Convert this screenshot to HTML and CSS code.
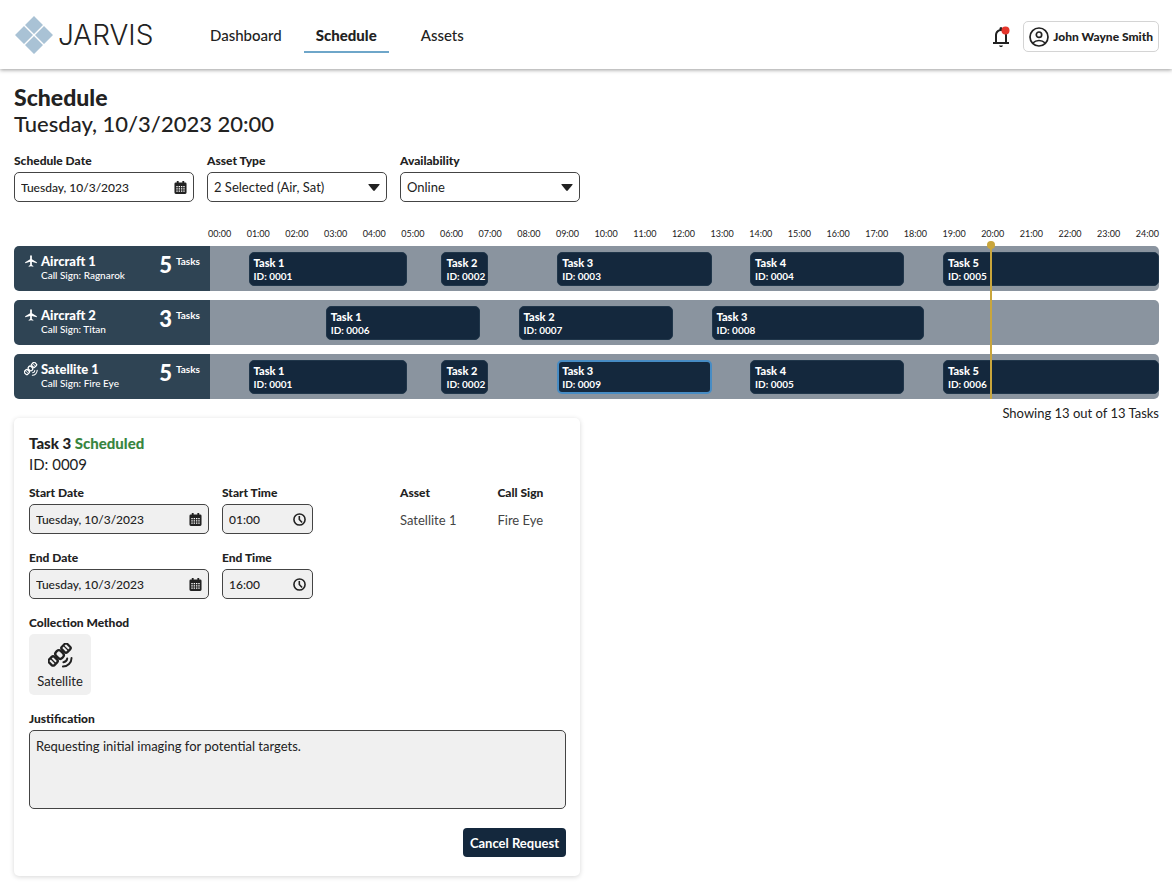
FILE: index.html
```html
<!DOCTYPE html>
<html lang="en">
<head>
  <meta charset="UTF-8" />
  <title>JARVIS - Schedule</title>
  <meta name="viewport" content="width=device-width,initial-scale=1" />
  <link rel="stylesheet" href="styles.css">
</head>
<body>

<!-- Shared icons -->
<svg class="sprite" aria-hidden="true">
  <symbol id="plane" viewBox="0 0 24 24">
    <path d="M22 16v-2l-8.500-5V3.500c0-.83-.67-1.500-1.500-1.500s-1.500.67-1.500 1.500V9L2 14v2l8.500-2.500V19L8 20.500V22l4-1 4 1v-1.500L13.500 19v-5.500L22 16z"/>
  </symbol>
  <symbol id="satellite" viewBox="0 0 26 26">
    <g fill="none" stroke="currentColor" stroke-width="2.400">
      <g transform="rotate(-45 12 12)">
        <rect x="-1.500" y="8" width="8" height="8" rx="2"/>
        <rect x="8.500" y="7.500" width="7" height="9" rx="3"/>
        <rect x="17.500" y="8" width="8" height="8" rx="2"/>
        <path d="M2.500 8v8M21.500 8v8M6 12h2.500M15.500 12h2" stroke-width="1.400"/>
      </g>
      <path d="M16 20a4.500 4.500 0 0 0 4-4M15.500 24.500a9 9 0 0 0 9-9" stroke-linecap="round" stroke-width="2"/>
    </g>
  </symbol>
  <symbol id="calendar" viewBox="0 0 14 14">
    <path d="M3 0h2v1.500h4V0h2v1.500h1A1.500 1.500 0 0 1 13.500 3v9.500A1.500 1.500 0 0 1 12 14H2a1.500 1.500 0 0 1-1.500-1.500V3A1.500 1.500 0 0 1 2 1.500h1z"/>
    <path d="M2.500 6h9M2.500 8.500h9M2.500 11h9" stroke="#fff" stroke-width="1.400" stroke-dasharray="1.500 1"/>
  </symbol>
  <symbol id="clock" viewBox="0 0 14 14">
    <g fill="none" stroke="currentColor" stroke-width="1.700">
      <circle cx="7" cy="7" r="6"/>
      <path d="M6.800 3.300V7l3 3.200"/>
    </g>
  </symbol>
  <symbol id="arrow" viewBox="0 0 12 7">
    <path d="M1 0h10q1 0 .5.800L6.800 6.500q-.8.900-1.600 0L.5.800Q0 0 1 0z"/>
  </symbol>
</svg>

<header class="topbar">
  <a class="logo" href="#">
    <svg viewBox="0 0 40 40">
      <path d="M20 1l9 9-9 9-9-9zM10 11l9 9-9 9-9-9zM30 11l9 9-9 9-9-9zM20 21l9 9-9 9-9-9z"/>
    </svg>
    <span>JARVIS</span>
  </a>
  <nav>
    <a href="#">Dashboard</a>
    <a href="#" class="active">Schedule</a>
    <a href="#">Assets</a>
  </nav>
  <div class="account">
    <button class="bell" aria-label="Notifications">
      <svg viewBox="0 0 24 24">
        <path d="M4 19v-2h2v-7q0-2.075 1.250-3.687T10.500 4.200v-.7q0-.625.438-1.062T12 2t1.063.438T13.500 3.500v.7q2 .5 3.250 2.113T18 10v7h2v2zm8 3q-.825 0-1.412-.587T10 20.500h4q0 .5-.587 1T12 22m-4-5h8v-7q0-1.650-1.175-2.825T12 6 9.175 7.175 8 10z"/>
        <circle cx="16.500" cy="5.500" r="4" fill="#e5352b"/>
      </svg>
    </button>
    <button class="user">
      <svg viewBox="0 0 20 20">
        <g fill="none" stroke="currentColor" stroke-width="1.700">
          <circle cx="10" cy="10" r="9"/>
          <circle cx="10" cy="7.700" r="2.700"/>
          <path d="M3.800 16q2.700-2.500 6.200-2.500t6.200 2.500"/>
        </g>
      </svg>
      John Wayne Smith
    </button>
  </div>
</header>

<main>
  <h1>Schedule</h1>
  <p class="now-text">Tuesday, 10/3/2023 20:00</p>

  <div class="filters">
    <div class="field">
      <label for="scheduleDate">Schedule Date</label>
      <div class="control">
        <input id="scheduleDate" type="text" value="Tuesday, 10/3/2023" />
        <svg class="icon"><use href="#calendar"/></svg>
      </div>
    </div>
    <div class="field">
      <label for="assetType">Asset Type</label>
      <div class="control">
        <select id="assetType"><option>2 Selected (Air, Sat)</option></select>
        <svg class="arrow"><use href="#arrow"/></svg>
      </div>
    </div>
    <div class="field">
      <label for="availability">Availability</label>
      <div class="control">
        <select id="availability"><option>Online</option></select>
        <svg class="arrow"><use href="#arrow"/></svg>
      </div>
    </div>
  </div>

  <section class="timeline">
    <div class="hours">
      <span>00:00</span><span>01:00</span><span>02:00</span><span>03:00</span><span>04:00</span>
      <span>05:00</span><span>06:00</span><span>07:00</span><span>08:00</span><span>09:00</span>
      <span>10:00</span><span>11:00</span><span>12:00</span><span>13:00</span><span>14:00</span>
      <span>15:00</span><span>16:00</span><span>17:00</span><span>18:00</span><span>19:00</span>
      <span>20:00</span><span>21:00</span><span>22:00</span><span>23:00</span><span>24:00</span>
    </div>

    
    <div class="rows">
      <div class="row">
        <div class="asset">
          <svg class="asset-icon"><use href="#plane"/></svg>
          <div class="asset-name"><b>Aircraft 1</b><span>Call Sign: Ragnarok</span></div>
          <div class="count"><strong>5</strong> Tasks</div>
        </div>
        <div class="track">
          <button class="task" style="grid-column:11/52"><b>Task 1</b><span>ID: 0001</span></button>
          <button class="task" style="grid-column:61/73"><b>Task 2</b><span>ID: 0002</span></button>
          <button class="task" style="grid-column:91/131"><b>Task 3</b><span>ID: 0003</span></button>
          <button class="task" style="grid-column:141/181"><b>Task 4</b><span>ID: 0004</span></button>
          <button class="task" style="grid-column:191/247"><b>Task 5</b><span>ID: 0005</span></button>
        </div>
      </div>

      <div class="row">
        <div class="asset">
          <svg class="asset-icon"><use href="#plane"/></svg>
          <div class="asset-name"><b>Aircraft 2</b><span>Call Sign: Titan</span></div>
          <div class="count"><strong>3</strong> Tasks</div>
        </div>
        <div class="track">
          <button class="task" style="grid-column:31/71"><b>Task 1</b><span>ID: 0006</span></button>
          <button class="task" style="grid-column:81/121"><b>Task 2</b><span>ID: 0007</span></button>
          <button class="task" style="grid-column:131/186"><b>Task 3</b><span>ID: 0008</span></button>
        </div>
      </div>

      <div class="row">
        <div class="asset">
          <svg class="asset-icon"><use href="#satellite"/></svg>
          <div class="asset-name"><b>Satellite 1</b><span>Call Sign: Fire Eye</span></div>
          <div class="count"><strong>5</strong> Tasks</div>
        </div>
        <div class="track">
          <button class="task" style="grid-column:11/52"><b>Task 1</b><span>ID: 0001</span></button>
          <button class="task" style="grid-column:61/73"><b>Task 2</b><span>ID: 0002</span></button>
          <button class="task selected" style="grid-column:91/131"><b>Task 3</b><span>ID: 0009</span></button>
          <button class="task" style="grid-column:141/181"><b>Task 4</b><span>ID: 0005</span></button>
          <button class="task" style="grid-column:191/247"><b>Task 5</b><span>ID: 0006</span></button>
        </div>
      </div>
      <div class="marker-area"><div class="marker" style="left:82.2%"></div></div>
    </div>
  </section>

  <div class="below">
    <section class="card">
      <h2>Task 3 <span class="status">Scheduled</span></h2>
      <p class="task-id">ID: 0009</p>

      <div class="card-top">
        <div class="dates">
          <div class="field">
            <label for="startDate">Start Date</label>
            <div class="control">
              <input id="startDate" type="text" value="Tuesday, 10/3/2023" readonly />
              <svg class="icon"><use href="#calendar"/></svg>
            </div>
          </div>
          <div class="field">
            <label for="startTime">Start Time</label>
            <div class="control">
              <input id="startTime" type="text" value="01:00" readonly />
              <svg class="icon"><use href="#clock"/></svg>
            </div>
          </div>
          <div class="field">
            <label for="endDate">End Date</label>
            <div class="control">
              <input id="endDate" type="text" value="Tuesday, 10/3/2023" readonly />
              <svg class="icon"><use href="#calendar"/></svg>
            </div>
          </div>
          <div class="field">
            <label for="endTime">End Time</label>
            <div class="control">
              <input id="endTime" type="text" value="16:00" readonly />
              <svg class="icon"><use href="#clock"/></svg>
            </div>
          </div>
        </div>
        <dl class="info">
          <div><dt>Asset</dt><dd>Satellite 1</dd></div>
          <div><dt>Call Sign</dt><dd>Fire Eye</dd></div>
        </dl>
      </div>

      <h3>Collection Method</h3>
      <div class="method">
        <svg><use href="#satellite"/></svg>
        Satellite
      </div>

      <div class="field">
        <label for="justification">Justification</label>
        <textarea id="justification" readonly>Requesting initial imaging for potential targets.</textarea>
      </div>

      <div class="actions">
        <button class="cancel">Cancel Request</button>
      </div>
    </section>
    <p class="showing">Showing 13 out of 13 Tasks</p>
  </div>
</main>

</body>
</html>
```
FILE: styles.css
```css
* { box-sizing:border-box; }
body {
  margin:0; background:#fff; color:#222;
  font-family:Lato, "Liberation Sans", sans-serif;
  font-size:13px; line-height:16px;
}
h1, h2, h3, p, dl, dd { margin:0; }
button, input, select, textarea { font:inherit; color:inherit; }
button { cursor:pointer; }
svg { fill:currentColor; flex-shrink:0; display:block; }
.sprite { position:absolute; width:0; height:0; }

/* TOP BAR */
.topbar {
  display:flex; align-items:center;
  height:69px; padding:0 13px 0 14px;
  box-shadow:0 1px 4px rgba(0,0,0,0.4);
}
.logo {
  display:flex; align-items:center; gap:4px; width:184px;
  color:#222; text-decoration:none;
  font-family:Inter, sans-serif; font-size:28px; line-height:32px; font-weight:300;
}
.logo svg { width:40px; height:40px; fill:#a9c2d5; }
nav { display:flex; flex:1; gap:10px; }
nav a {
  padding:10px 12px 7px; border-bottom:2px solid transparent;
  color:#222; text-decoration:none; font-size:15px; line-height:18px; font-weight:500;
}
nav a.active { margin-right:10px; font-weight:900; border-color:#6ea6c9; }
.account { display:flex; align-items:center; gap:10px; padding-top:4px; }
.bell { padding:0; border:0; background:none; }
.bell svg { width:24px; height:24px; }
.user {
  display:flex; align-items:center; gap:4px;
  height:31px; padding:0 5px;
  border:1px solid #d4d4d4; border-radius:5px; background:#fff;
  font-size:12px; font-weight:900;
}
.user svg { width:20px; height:20px; }

main { padding:15px 13px 8px 14px; }
h1 { font-size:23px; line-height:26px; font-weight:900; }
.now-text { font-size:22px; line-height:28px; font-weight:500; }

/* FIELDS */
.filters { display:flex; gap:13px; margin-top:15px; }
.filters .field { width:180px; }
label, h3, dt {
  display:block; margin-bottom:3px;
  font-size:12px; line-height:16px; font-weight:900;
}
.control {
  display:flex; align-items:center; position:relative;
  height:30px; border:1px solid #444; border-radius:5px; background:#fff;
}
.control input, .control select {
  width:100%; height:100%; min-width:0; padding:0 6px;
  border:0; border-radius:5px; background:none; appearance:none; outline:none;
}
.control input { font-size:12px; font-weight:500; }
.control .icon, .control .arrow { position:absolute; pointer-events:none; }
.control .icon { right:6px; width:13px; height:13px; }
.control .arrow { right:6px; width:12px; height:7px; }

/* TIMELINE */
.timeline { margin-top:24px; }
.hours {
  display:flex; justify-content:space-between;
  margin:0 0 4px 194px; font-size:9px;
}
.rows { display:grid; gap:9px; position:relative; }
.row { display:flex; height:45px; border-radius:5px; overflow:hidden; }
.asset {
  display:flex; align-items:flex-start; gap:3px;
  width:196px; padding:8px 10px; flex-shrink:0;
  background:#2f4454; color:#fff;
}
.asset-icon { width:14px; height:14px; }
.asset-name { flex:1; font-size:10px; line-height:12px; font-weight:500; }
.asset-name b { font-size:13px; line-height:15px; font-weight:900; }
.asset-name b, .asset-name span, .task b, .task span { display:block; }
.count { display:flex; gap:4px; font-size:10px; line-height:15px; font-weight:700; }
.count strong { font-size:22px; line-height:22px; }
.track {
  flex:1; display:grid; grid-template-columns:repeat(246, minmax(0, 1fr));
  align-items:center; background:#8a949f;
}
.task {
  height:34px; padding:3px 4px; overflow:hidden;
  border:1px solid #20364a; border-radius:5px; background:#14283d; color:#fff;
  font-size:10px; line-height:13px; font-weight:700; text-align:left; white-space:nowrap;
}
.task b { font-size:11px; line-height:14px; font-weight:900; }
.task.selected { border:2px solid #478cc4; padding:2px 3px; }

/* current time line, drawn over the rows */
.marker-area { position:absolute; top:0; bottom:0; left:196px; right:0; pointer-events:none; }
.marker { position:absolute; top:0; bottom:0; width:2px; background:#c9a63c; }
.marker::before {
  content:""; position:absolute; top:-5px; left:-3px;
  width:8px; height:8px; border-radius:50%; background:#c9a63c;
}

/* TASK DETAILS */
.below { display:flex; justify-content:space-between; align-items:flex-start; }
.showing { margin-top:6px; }
.card {
  width:50%; max-width:566px; min-width:540px;
  margin-top:19px; padding:15px 14px 19px 15px;
  border-radius:5px; box-shadow:0 1px 5px rgba(0,0,0,0.16);
}
h2 { font-size:15px; line-height:21px; font-weight:900; }
.status { color:#388540; }
.task-id { font-size:15px; line-height:21px; }
.card .control, .card textarea { background:#f0f0f0; }
.card-top { display:flex; gap:87px; margin:10px 0 16px; }
.dates { display:grid; grid-template-columns:180px 91px; gap:16px 13px; }
.info { display:flex; gap:41px; }
.info dd { padding-top:8px; color:#444; }
.method {
  display:flex; flex-direction:column; align-items:center; gap:6px;
  width:62px; height:61px; padding-top:9px; margin-bottom:16px;
  border-radius:5px; background:#f0f0f0; line-height:14px;
}
.method svg { width:25px; height:25px; }
textarea {
  display:block; width:100%; height:79px; padding:7px 6px;
  border:1px solid #444; border-radius:5px; resize:none; outline:none;
}
.actions { display:flex; justify-content:flex-end; margin-top:19px; }
.cancel {
  height:29px; padding:0 7px; border:0; border-radius:4px;
  background:#14283d; color:#fff; font-weight:700;
}
```
